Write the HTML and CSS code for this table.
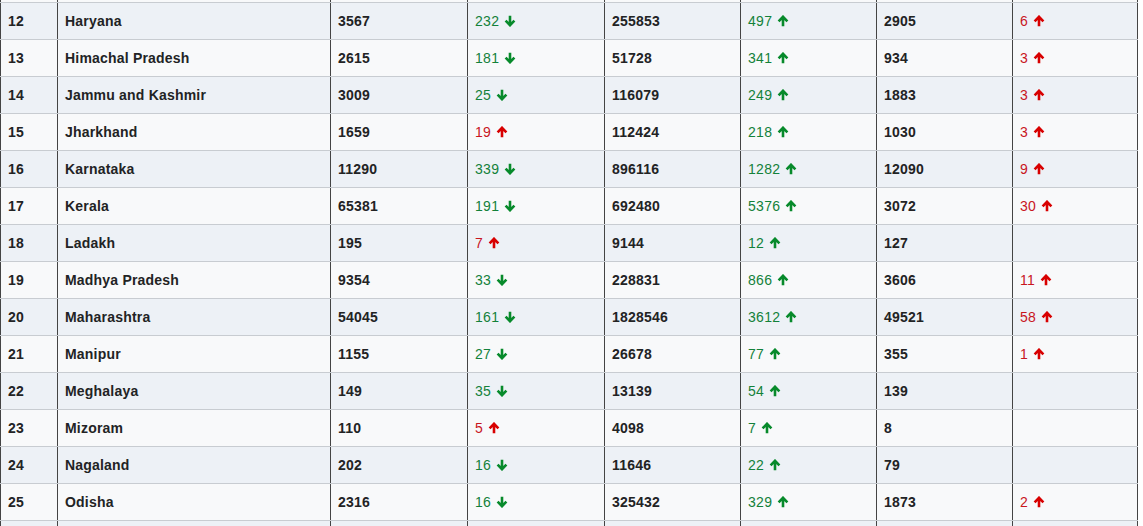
FILE: index.html
```html
<!DOCTYPE html>
<html lang="en">
<head>
<meta charset="utf-8">
<title>State-wise table</title>
<link rel="stylesheet" href="styles.css">
</head>
<body>
<svg class="defs" width="0" height="0" aria-hidden="true">
  <defs>
    <symbol id="up" viewBox="0 0 12 12"><path d="M6 11.2V2.2M1.6 6.4L6 1.8 10.4 6.4" fill="none" stroke="currentColor" stroke-width="2.6" stroke-linejoin="miter"/></symbol>
    <symbol id="down" viewBox="0 0 12 12"><path d="M6 0.8V9.8M1.6 5.6L6 10.2 10.4 5.6" fill="none" stroke="currentColor" stroke-width="2.6" stroke-linejoin="miter"/></symbol>
  </defs>
</svg>
<div class="table">
  <div class="row stub odd"><div></div><div></div><div></div><div></div><div></div><div></div><div></div><div></div></div>

  <div class="row even"><div>12</div><div>Haryana</div><div>3567</div><div class="g">232<svg class="ar ga"><use href="#down"/></svg></div><div>255853</div><div class="g">497<svg class="ar ga"><use href="#up"/></svg></div><div>2905</div><div class="r">6<svg class="ar ra"><use href="#up"/></svg></div></div>
  <div class="row odd"><div>13</div><div>Himachal Pradesh</div><div>2615</div><div class="g">181<svg class="ar ga"><use href="#down"/></svg></div><div>51728</div><div class="g">341<svg class="ar ga"><use href="#up"/></svg></div><div>934</div><div class="r">3<svg class="ar ra"><use href="#up"/></svg></div></div>
  <div class="row even"><div>14</div><div>Jammu and Kashmir</div><div>3009</div><div class="g">25<svg class="ar ga"><use href="#down"/></svg></div><div>116079</div><div class="g">249<svg class="ar ga"><use href="#up"/></svg></div><div>1883</div><div class="r">3<svg class="ar ra"><use href="#up"/></svg></div></div>
  <div class="row odd"><div>15</div><div>Jharkhand</div><div>1659</div><div class="r">19<svg class="ar ra"><use href="#up"/></svg></div><div>112424</div><div class="g">218<svg class="ar ga"><use href="#up"/></svg></div><div>1030</div><div class="r">3<svg class="ar ra"><use href="#up"/></svg></div></div>
  <div class="row even"><div>16</div><div>Karnataka</div><div>11290</div><div class="g">339<svg class="ar ga"><use href="#down"/></svg></div><div>896116</div><div class="g">1282<svg class="ar ga"><use href="#up"/></svg></div><div>12090</div><div class="r">9<svg class="ar ra"><use href="#up"/></svg></div></div>
  <div class="row odd"><div>17</div><div>Kerala</div><div>65381</div><div class="g">191<svg class="ar ga"><use href="#down"/></svg></div><div>692480</div><div class="g">5376<svg class="ar ga"><use href="#up"/></svg></div><div>3072</div><div class="r">30<svg class="ar ra"><use href="#up"/></svg></div></div>
  <div class="row even"><div>18</div><div>Ladakh</div><div>195</div><div class="r">7<svg class="ar ra"><use href="#up"/></svg></div><div>9144</div><div class="g">12<svg class="ar ga"><use href="#up"/></svg></div><div>127</div><div></div></div>
  <div class="row odd"><div>19</div><div>Madhya Pradesh</div><div>9354</div><div class="g">33<svg class="ar ga"><use href="#down"/></svg></div><div>228831</div><div class="g">866<svg class="ar ga"><use href="#up"/></svg></div><div>3606</div><div class="r">11<svg class="ar ra"><use href="#up"/></svg></div></div>
  <div class="row even"><div>20</div><div>Maharashtra</div><div>54045</div><div class="g">161<svg class="ar ga"><use href="#down"/></svg></div><div>1828546</div><div class="g">3612<svg class="ar ga"><use href="#up"/></svg></div><div>49521</div><div class="r">58<svg class="ar ra"><use href="#up"/></svg></div></div>
  <div class="row odd"><div>21</div><div>Manipur</div><div>1155</div><div class="g">27<svg class="ar ga"><use href="#down"/></svg></div><div>26678</div><div class="g">77<svg class="ar ga"><use href="#up"/></svg></div><div>355</div><div class="r">1<svg class="ar ra"><use href="#up"/></svg></div></div>
  <div class="row even"><div>22</div><div>Meghalaya</div><div>149</div><div class="g">35<svg class="ar ga"><use href="#down"/></svg></div><div>13139</div><div class="g">54<svg class="ar ga"><use href="#up"/></svg></div><div>139</div><div></div></div>
  <div class="row odd"><div>23</div><div>Mizoram</div><div>110</div><div class="r">5<svg class="ar ra"><use href="#up"/></svg></div><div>4098</div><div class="g">7<svg class="ar ga"><use href="#up"/></svg></div><div>8</div><div></div></div>
  <div class="row even"><div>24</div><div>Nagaland</div><div>202</div><div class="g">16<svg class="ar ga"><use href="#down"/></svg></div><div>11646</div><div class="g">22<svg class="ar ga"><use href="#up"/></svg></div><div>79</div><div></div></div>
  <div class="row odd"><div>25</div><div>Odisha</div><div>2316</div><div class="g">16<svg class="ar ga"><use href="#down"/></svg></div><div>325432</div><div class="g">329<svg class="ar ga"><use href="#up"/></svg></div><div>1873</div><div class="r">2<svg class="ar ra"><use href="#up"/></svg></div></div>
  <div class="row even"><div></div><div></div><div></div><div></div><div></div><div></div><div></div><div></div></div>
</div>
</body>
</html>
```

FILE: styles.css
```css
html, body {
  margin: 0;
  padding: 0;
  background: #ffffff;
}
.defs {
  position: absolute;
  width: 0;
  height: 0;
}
.table {
  width: 1138px;
  font-family: "Liberation Sans", Arial, sans-serif;
  font-size: 14px;
  color: #222324;
}
.row {
  display: grid;
  grid-template-columns: 57px 273px 137px 137px 136px 136px 136px 126px;
  height: 37px;
  box-sizing: border-box;
  border-bottom: 1px solid #c8ccd1;
}
.row.stub {
  height: 3px;
}
.row > div {
  border-left: 1px solid #444;
  padding-left: 7px;
  display: flex;
  align-items: center;
  font-weight: bold;
  letter-spacing: 0.2px;
  white-space: nowrap;
  overflow: hidden;
}
.row > div:last-child {
  border-right: 1px solid #444;
}
.even {
  background: #edf1f6;
}
.odd {
  background: #f8f9fa;
}
.row > div.g {
  color: #13813a;
  font-weight: normal;
  letter-spacing: 0.3px;
}
.row > div.r {
  color: #c8161d;
  font-weight: normal;
  letter-spacing: 0.3px;
}
.ar {
  width: 12px;
  height: 12px;
  margin-left: 5px;
}
.ga {
  color: #078a2b;
}
.ra {
  color: #d80000;
}
```
